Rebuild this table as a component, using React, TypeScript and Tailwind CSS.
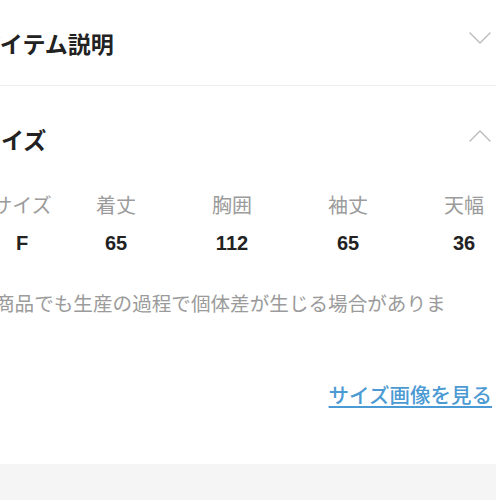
import React from 'react';

const sizes = [
  { label: 'サイズ', value: 'F' },
  { label: '着丈', value: '65' },
  { label: '胸囲', value: '112' },
  { label: '袖丈', value: '65' },
  { label: '天幅', value: '36' },
];

const Chevron = ({ up = false }: { up?: boolean }) => (
  <svg width="22" height="13" viewBox="0 0 22 13" fill="none" className="shrink-0">
    <polyline
      points={up ? '1,12 11,2 21,12' : '1,1 11,11 21,1'}
      stroke="#b8b8b8"
      strokeWidth="1.3"
      strokeLinecap="round"
      strokeLinejoin="round"
    />
  </svg>
);

export default function App() {
  return (
    <div className="w-[500px] h-[500px] overflow-hidden bg-white font-['Noto_Sans_CJK_JP','Noto_Sans',sans-serif]">
      <div className="ml-[-22px] w-[518px]">
        {/* アイテム説明 */}
        <div className="h-[86px] flex items-center justify-between pr-[5px] border-b border-[#ececec]">
          <h2 className="text-[23px] leading-[26px] font-bold text-[#222]">アイテム説明</h2>
          <div className="mb-[8px]">
            <Chevron />
          </div>
        </div>

        {/* サイズ */}
        <div className="h-[106px] flex items-center justify-between pr-[5px]">
          <h2 className="text-[23px] leading-[26px] font-bold text-[#222]">サイズ</h2>
          <div className="mb-[8px]">
            <Chevron up />
          </div>
        </div>

        <div className="ml-[8px] grid grid-cols-[72px_116px_116px_116px_116px]">
          {sizes.map((s) => (
            <div key={s.label} className="flex flex-col items-center">
              <span className="text-[20px] leading-[26px] text-[#9b9b9b]">{s.label}</span>
              <span className="mt-[12px] text-[20px] leading-[26px] font-semibold text-[#222] font-['Liberation_Sans',sans-serif]">
                {s.value}
              </span>
            </div>
          ))}
        </div>

        <div className="mt-[34px] ml-[17px] overflow-hidden whitespace-nowrap">
          <p className="text-[19.6px] leading-[26px] text-[#9b9b9b]">商品でも生産の過程で個体差が生じる場合がありま</p>
        </div>

        <div className="mt-[65px] flex justify-end pr-[4px]">
          <a href="#" className="text-[20.5px] leading-[26px] font-medium text-[#4b9ad3] underline underline-offset-[3px] decoration-[1.5px]">
            サイズ画像を見る
          </a>
        </div>

        <div className="mt-[57px] h-[40px] bg-[#f5f5f5]" />
      </div>
    </div>
  );
}
